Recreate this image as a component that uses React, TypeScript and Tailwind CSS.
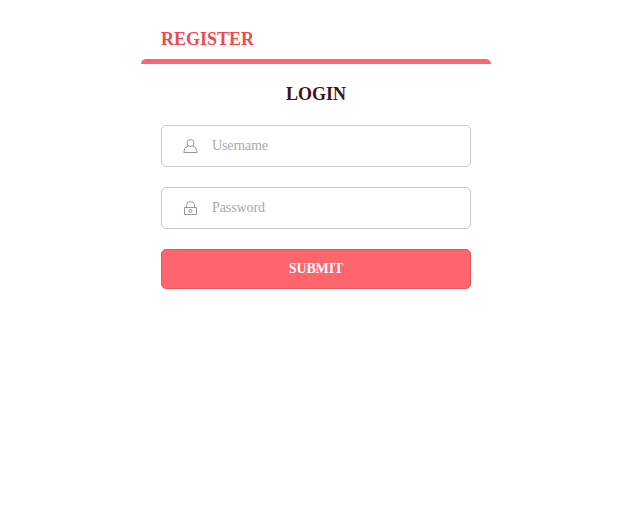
export default function App() {
  return (
    <main className="flex min-h-[511px] justify-center bg-white pr-[11px] font-['Liberation_Serif',serif]">
      <div className="w-[350px]">
        <header className="flex h-[59px] items-end px-5 pb-2.5">
          <a className="text-[18px] leading-5 font-bold text-[#f04a50]">REGISTER</a>
        </header>
        <section>
          <div className="h-[5px] rounded-t-[5px] bg-[#ff656c]" />
          <form className="flex flex-col px-5 pt-5">
            <h1 className="mb-[21px] text-center text-[18px] leading-5 font-bold text-[#42121a]">LOGIN</h1>
            <label className="mb-5 flex h-[42px] items-center rounded-[5px] border border-[#c8c8cc] pl-[21px]">
              <svg className="h-4 w-4" viewBox="0 0 16 16" fill="none" stroke="#9793ae">
                <circle cx="7.5" cy="5" r="3.5" />
                <path d="M5.2 8 L3 9.2 Q1.8 10 1.4 12 L.8 14.5 H14.2 L13.6 12 Q13.2 10 12 9.2 L9.8 8" />
              </svg>
              <span className="ml-[13px] pb-px text-[14px] leading-[15px] tracking-[-0.1px] text-[#a9a9a9]">Username</span>
            </label>
            <label className="mb-5 flex h-[42px] items-center rounded-[5px] border border-[#c8c8cc] pl-[21px]">
              <svg className="h-4 w-4" viewBox="0 0 16 16" fill="none" stroke="#9793ae">
                <path d="M1.5 7.5H13.5V14.5H1.5ZM3.5 7.5V5.5A4 4 0 0 1 11.5 5.5V7.5" />
                <circle cx="7.5" cy="11" r="1.5" />
              </svg>
              <span className="ml-[13px] pb-px text-[14px] leading-[15px] tracking-[-0.1px] text-[#a9a9a9]">Password</span>
            </label>
            <button type="button" className="h-10 rounded-[5px] border border-[#e0595f] bg-[#ff656c] pb-px text-[14px] leading-[15px] font-bold tracking-[-0.15px] text-white">SUBMIT</button>
          </form>
        </section>
      </div>
    </main>
  );
}
